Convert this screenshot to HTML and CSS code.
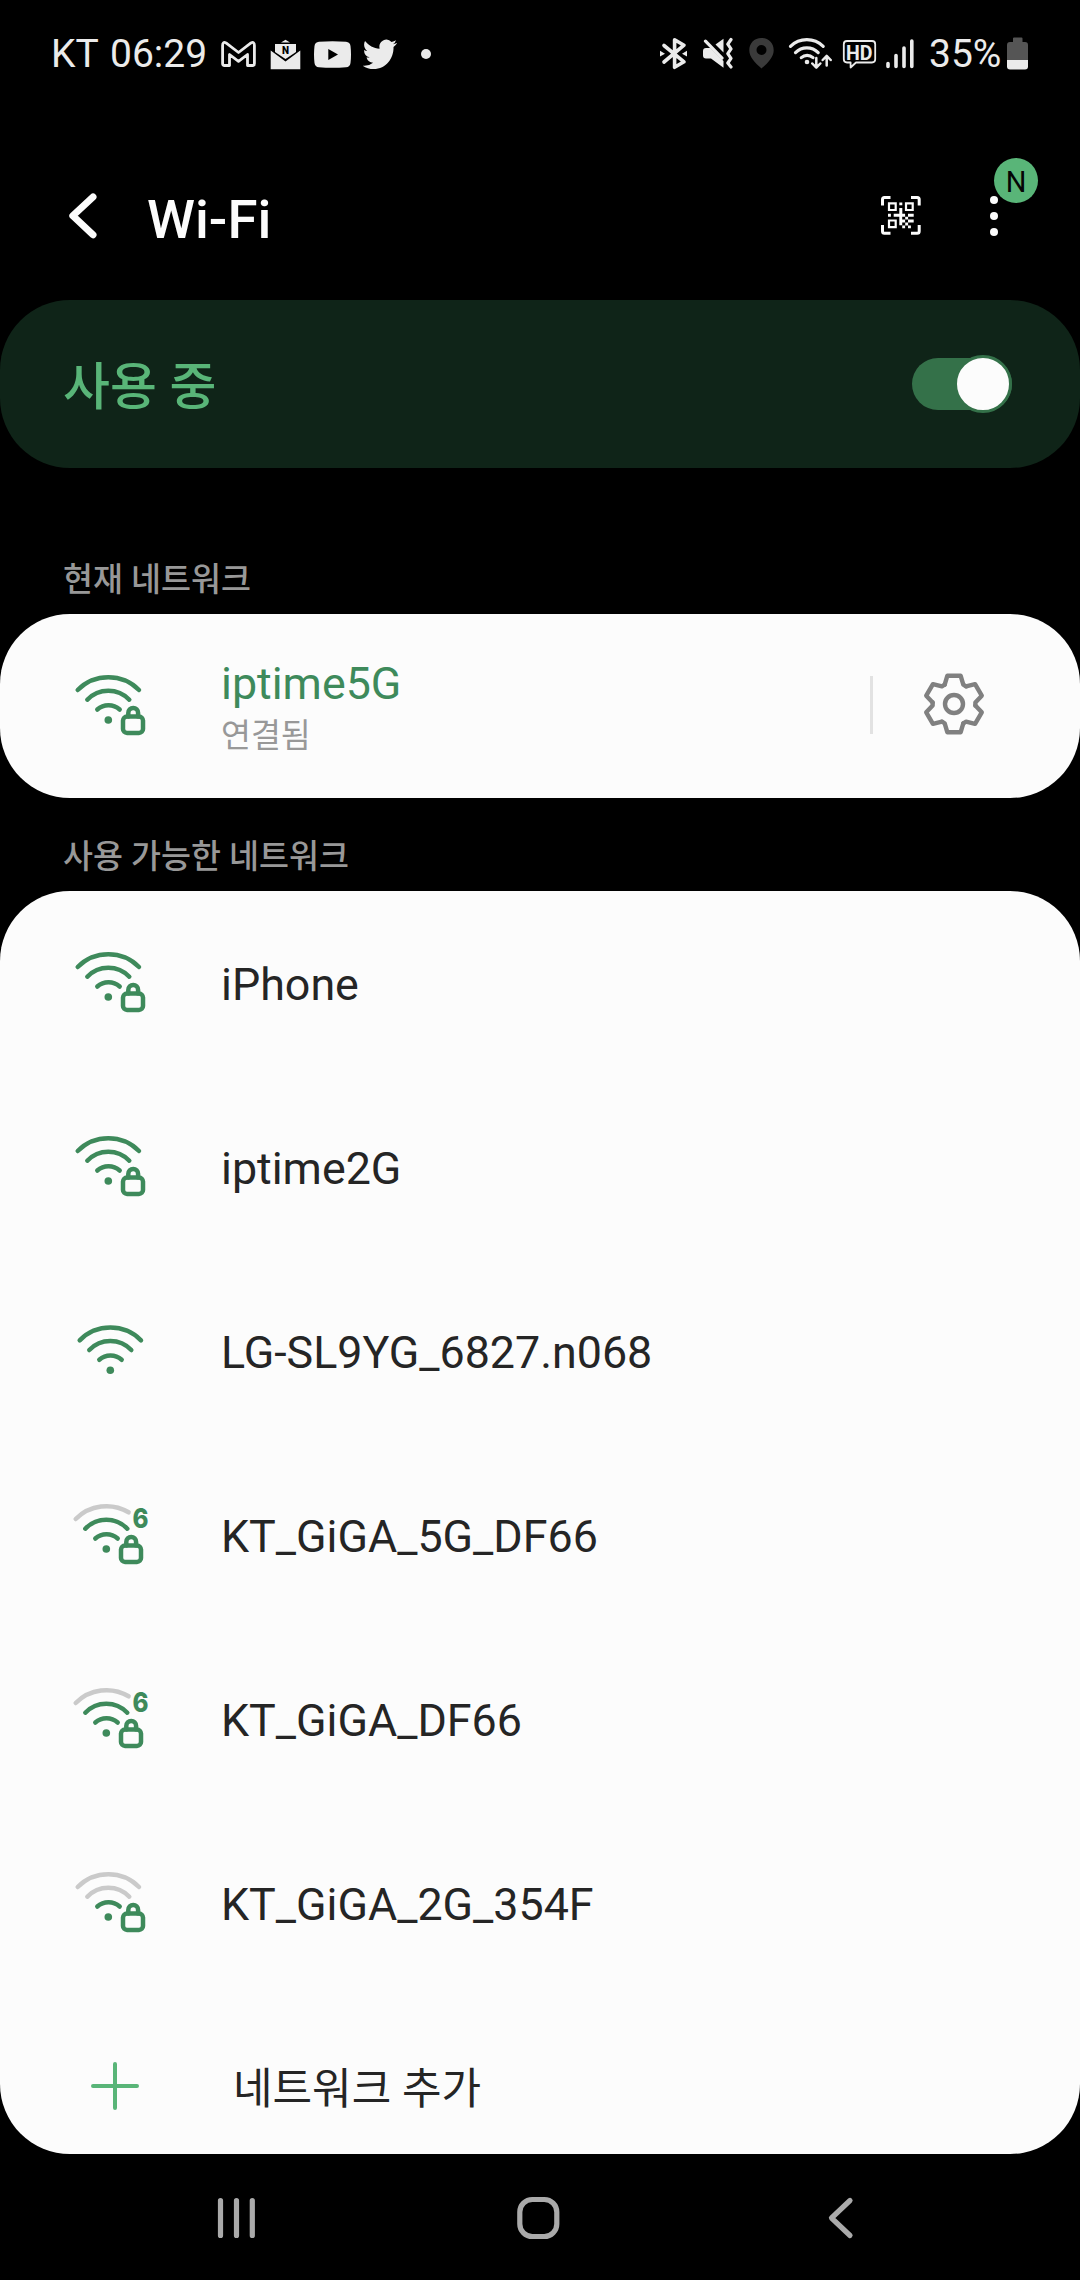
FILE: index.html
```html
<!DOCTYPE html>
<html lang="ko">
<head>
<meta charset="utf-8">
<title>Wi-Fi</title>
<link rel="stylesheet" href="styles.css">
</head>
<body>
<svg class="defs" width="0" height="0">
  <defs>
    <g id="lock">
      <rect x="51" y="45.600" width="20" height="16.300" rx="4"/>
      <path d="M56.300 45.500V41.900a4.900 4.900 0 0 1 9.800 0V45.500"/>
    </g>
    <path id="arc3" d="M5.700 19A43.300 43.300 0 0 1 67 19"/>
    <path id="arc3short" d="M5.700 19A43.300 43.300 0 0 1 58.600 12.300"/>
    <path id="arc2" d="M15.300 28.700A29 29 0 0 1 57.300 28.700"/>
    <path id="arc1" d="M25.300 38.500A17 17 0 0 1 47.700 38.500"/>
    <circle id="dot" cx="36.300" cy="49" r="3.800"/>
    <path id="tooth" d="M-9.300-19.300L-6.700-28.200H6.700L9.300-19.300L12.050-17.700"/>
  </defs>
</svg>

<header class="status">
  <span class="carrier">KT</span>
  <span class="clock">06:29</span>
  <svg class="st gmail" width="36" height="40" viewBox="220 34 36 40"><path class="line" d="M222.600 45.500q0-4.200 3.400-2.600L238.500 52.500 251 42.900q3.400-1.600 3.400 2.600V63.500q0 2-2 2H247.500V54.500L238.500 61.300 229.500 54.500V65.500H224.600q-2 0-2-2z"/></svg>
  <svg class="st mail" width="32" height="40" viewBox="270 34 32 40"><path d="M281 42.500L285.500 39.700 290 42.500zM275 44H296V52L285.500 59 275 52zM270.700 50.500L285.500 61.500 300.300 50.500V69.300H270.700z"/><text class="mail-n" x="285.500" y="54">N</text></svg>
  <svg class="st tube" width="38" height="40" viewBox="314 34 38 40"><path fill-rule="evenodd" d="M319 41.700q13.500-1 27 0 4 .3 4.500 4.300 1 8.500 0 17-.5 4-4.500 4.300-13.500 1-27 0-4-.3-4.500-4.300-1-8.500 0-17 .5-4 4.500-4.300zM328.300 49V60L338 54.500z"/></svg>
  <svg class="st bird" width="36" height="40" viewBox="362 34 36 40"><path transform="translate(362.700 36.200) scale(1.430 1.510)" d="M23.953 4.570a10 10 0 01-2.825.775 4.958 4.958 0 002.163-2.723c-.951.555-2.005.959-3.127 1.184a4.920 4.920 0 00-8.384 4.482C7.690 8.095 4.067 6.130 1.640 3.162a4.822 4.822 0 00-.666 2.475c0 1.710.870 3.213 2.188 4.096a4.904 4.904 0 01-2.228-.616v.06a4.923 4.923 0 003.946 4.827 4.996 4.996 0 01-2.212.085 4.936 4.936 0 004.604 3.417 9.867 9.867 0 01-6.102 2.105c-.39 0-.779-.023-1.170-.067a13.995 13.995 0 007.557 2.209c9.053 0 13.998-7.496 13.998-13.985 0-.21 0-.42-.015-.63A9.935 9.935 0 0024 4.590z"/></svg>
  <i class="more-dot"></i>
  <svg class="st bt" width="30" height="40" viewBox="659 34 30 40"><path class="thick" d="M664 45.500L684 61.800 674.600 67.300V39.700L684 45.200 664 62"/><path d="M660 50.800v5.800l5-2.900zM687 50.800v5.800l-5-2.900z"/></svg>
  <svg class="st mute" width="31" height="40" viewBox="702 34 31 40"><path d="M703 51q0-3 3-3H710.500L723.500 61V67.700L711 58.500H706q-3 0-3-3zM715.500 44.500L723.500 38.700V52.500z"/><path class="mid" d="M705.500 41.200L722 58M731 39.500L727.800 44.200 731 48.900 727.800 53.600 731 58.300 727.800 63 731 67"/></svg>
  <svg class="st pin" width="27" height="40" viewBox="748 34 27 40"><path fill-rule="evenodd" d="M761.500 38C754 38 749.300 43.500 749.300 50.300 749.300 57 755 63 761.500 68.500 768 63 773.700 57 773.700 50.300 773.700 43.500 769 38 761.500 38zM761.500 45a5 5 0 1 1 0 10 5 5 0 0 1 0-10z"/></svg>
  <svg class="st swifi" width="44" height="40" viewBox="788 34 44 40"><path class="mid" d="M790.500 46.300A23.400 23.400 0 0 1 823.200 46.300M795.500 52.600A16 16 0 0 1 818.200 52.600M801.300 57.600A9 9 0 0 1 813 57.600"/><circle cx="807" cy="62" r="2.300"/><path class="thin" d="M816.300 58V67.500M812.300 63.500L816.300 67.700 820.300 63.500M826.700 65.500V56M822.700 60L826.700 55.800 830.700 60"/></svg>
  <svg class="st hd" width="36" height="40" viewBox="842 34 36 40"><path class="hair" d="M847 41H872q3.200 0 3.200 3.200V59.300q0 3.200-3.200 3.200H856L850.600 67.500V62.500H847q-3.200 0-3.200-3.200V44.200q0-3.200 3.200-3.200z"/><text class="hd-t" x="846" y="59.500" textLength="26.500" lengthAdjust="spacingAndGlyphs">HD</text></svg>
  <svg class="st sig" width="30" height="40" viewBox="885 34 30 40"><path class="bars" d="M888 63.500V66.500M896 55.500V66.500M904 48V66.500M911.800 41V66.500"/></svg>
  <span class="percent">35%</span>
  <svg class="st bat" width="22" height="40" viewBox="1007 34 22 40"><path class="grey" d="M1013 42V38.500q0-1 1-1H1021.500q1 0 1 1V42H1025q3 0 3 3V60H1007V45q0-3 3-3z"/><path d="M1007 60H1028V66.500q0 3-3 3H1010q-3 0-3-3z"/></svg>
</header>

<nav class="appbar">
  <svg class="back" width="30" height="48" viewBox="68 192 30 48"><path d="M93 197L72.800 215.800 93 234.800"/></svg>
  <h1>Wi-Fi</h1>
  <svg class="qr" width="40" height="40" viewBox="881 196 40 40">
    <path class="frame" d="M882.500 205.500V199.500q0-2 2-2H890.500M911 197.500H917.200q2 0 2 2V205.500M919.200 225V231.200q0 2-2 2H911M890.500 233.200H884.500q-2 0-2-2V225"/>
    <path class="finder" d="M889 203.300h6.700v6.700h-6.700zM906 203.300h6.700v6.700h-6.700zM889 220.500h6.700v6.700h-6.700z"/>
    <path d="M899.300 202.400h3v2.900h-3zM899.300 208h3v6h-3zM888 213.800h2.900v2.900h-2.900zM893.700 213.800h11.400v2.900h-11.400zM908 213.800h5.700v2.900h-5.700zM899.300 216.700h2.900v8.500h-2.900zM905.200 216.700h2.900v2.900h-2.900zM902.200 219.600h2.900v2.900h-2.900zM908 219.600h5.700v2.900h-5.700zM905.200 222.500h2.900v2.900h-2.900zM902.200 225.400h2.900v2.900h-2.900zM908 225.400h2.900v2.900h-2.900z"/>
  </svg>
  <div class="menu">
    <i></i><i></i><i></i>
    <b class="badge">N</b>
  </div>
</nav>

<section class="master">
  <span>사용 중</span>
  <div class="switch"><i></i></div>
</section>

<h2 class="label first">현재 네트워크</h2>
<section class="card">
  <div class="row current">
    <svg class="wifi" width="80" height="70"><use href="#arc3"/><use href="#arc2"/><use href="#arc1"/><use class="fill" href="#dot"/><use href="#lock"/></svg>
    <div class="names"><span class="ssid">iptime5G</span><span class="state">연결됨</span></div>
    <i class="divider"></i>
    <svg class="gear" width="64" height="64" viewBox="-32 -32 64 64"><use href="#tooth"/><use href="#tooth" transform="rotate(60)"/><use href="#tooth" transform="rotate(120)"/><use href="#tooth" transform="rotate(180)"/><use href="#tooth" transform="rotate(240)"/><use href="#tooth" transform="rotate(300)"/><circle r="9"/></svg>
  </div>
</section>

<h2 class="label">사용 가능한 네트워크</h2>
<section class="card">
  <div class="row">
    <svg class="wifi" width="80" height="70"><use href="#arc3"/><use href="#arc2"/><use href="#arc1"/><use class="fill" href="#dot"/><use href="#lock"/></svg>
    <span class="ssid">iPhone</span>
  </div>
  <div class="row">
    <svg class="wifi" width="80" height="70"><use href="#arc3"/><use href="#arc2"/><use href="#arc1"/><use class="fill" href="#dot"/><use href="#lock"/></svg>
    <span class="ssid">iptime2G</span>
  </div>
  <div class="row">
    <svg class="wifi" width="80" height="70" viewBox="-2 -5.300 80 70"><use href="#arc3"/><use href="#arc2"/><use href="#arc1"/><use class="fill" href="#dot"/></svg>
    <span class="ssid">LG-SL9YG_6827.n068</span>
  </div>
  <div class="row">
    <svg class="wifi" width="80" height="70" viewBox="2 0 80 70"><use class="off" href="#arc3short"/><use href="#arc2"/><use href="#arc1"/><use class="fill" href="#dot"/><use href="#lock"/><text class="six" x="62.500" y="28" textLength="16" lengthAdjust="spacingAndGlyphs">6</text></svg>
    <span class="ssid">KT_GiGA_5G_DF66</span>
  </div>
  <div class="row">
    <svg class="wifi" width="80" height="70" viewBox="2 0 80 70"><use class="off" href="#arc3short"/><use href="#arc2"/><use href="#arc1"/><use class="fill" href="#dot"/><use href="#lock"/><text class="six" x="62.500" y="28" textLength="16" lengthAdjust="spacingAndGlyphs">6</text></svg>
    <span class="ssid">KT_GiGA_DF66</span>
  </div>
  <div class="row">
    <svg class="wifi" width="80" height="70"><use class="off" href="#arc3"/><use class="off" href="#arc2"/><use href="#arc1"/><use class="fill" href="#dot"/><use href="#lock"/></svg>
    <span class="ssid">KT_GiGA_2G_354F</span>
  </div>
  <div class="row add">
    <svg class="plus" width="50" height="50"><path d="M25 3V47M3 25H47"/></svg>
    <span>네트워크 추가</span>
  </div>
</section>

<footer class="keys">
  <svg width="40" height="44"><path d="M4.500 4.500V39.500M20.500 4.500V39.500M36.300 4.500V39.500"/></svg>
  <svg width="44" height="44"><rect x="3.800" y="3.500" width="37" height="37" rx="12.500"/></svg>
  <svg width="30" height="44"><path d="M24 4.500L5.500 22 24 39.500"/></svg>
</footer>
</body>
</html>
```
FILE: styles.css
```css
* { box-sizing: border-box; }
body {
  margin: 0;
  width: 1080px;
  height: 2280px;
  overflow: hidden;
  background: #000;
  color: #fcfcfc;
  font-family: Roboto, "Noto Sans CJK KR", sans-serif;
  display: flex;
  flex-direction: column;
}
svg { display: block; flex: none; }
.defs { height: 0; }

.status {
  height: 108px;
  flex: none;
  display: flex;
  align-items: center;
  padding-left: 51px;
  font-size: 39px;
  color: #ebebeb;
}
.carrier { width: 59px; }
.clock { width: 110px; }
.carrier, .clock, .percent { line-height: 46px; white-space: nowrap; }
.st { fill: #ebebeb; }
.st .line, .st .thick, .st .mid, .st .thin, .st .hair, .st .bars {
  fill: none;
  stroke: #ebebeb;
  stroke-linecap: round;
  stroke-linejoin: round;
}
.st .line { stroke-width: 2.800; }
.st .thick { stroke-width: 3.600; }
.st .mid { stroke-width: 3.200; }
.st .thin { stroke-width: 2.500; }
.st .hair { stroke-width: 1.800; }
.st .bars { stroke-width: 3.600; }
.mail { margin-left: 14px; }
.mail-n { font: 900 10px Roboto, sans-serif; text-anchor: middle; fill: #000; }
.tube { margin-left: 12px; }
.bird { margin-left: 10px; }
.more-dot { width: 10px; height: 10px; margin-left: 23px; border-radius: 50%; background: #ebebeb; }
.bt { margin-left: 228px; }
.mute { margin-left: 13px; }
.st.pin { margin-left: 15px; fill: #3a3a3a; }
.swifi { margin-left: 13px; }
.hd { margin-left: 10px; }
.hd-t { font: 700 20px Roboto, sans-serif; }
.sig { margin-left: 7px; }
.percent { margin-left: 14px; width: 78px; }
.bat .grey { fill: #555; }

.appbar {
  height: 192px;
  flex: none;
  display: flex;
  align-items: center;
  padding: 24px 0 0 68px;
}
.back path { fill: none; stroke: #fcfcfc; stroke-width: 7; stroke-linecap: round; stroke-linejoin: round; }
h1 { margin: 6px 0 0 49px; width: 734px; font-size: 54.500px; line-height: 64px; font-weight: 500; }
.qr { fill: #fcfcfc; }
.qr .frame { fill: none; stroke: #fcfcfc; stroke-width: 3; }
.qr .finder { fill: none; stroke: #fcfcfc; stroke-width: 2.200; }
.menu { position: relative; margin: 0 0 0 69px; width: 8px; display: flex; flex-direction: column; gap: 8.400px; }
.menu i { width: 8px; height: 8px; border-radius: 50%; background: #fcfcfc; }
.badge {
  position: absolute;
  left: 4px;
  top: -38px;
  width: 44px;
  height: 45px;
  border-radius: 50%;
  background: #59b578;
  color: #050505;
  font-size: 29px;
  font-weight: 400;
  line-height: 48px;
  text-align: center;
}

.master {
  height: 168px;
  flex: none;
  display: flex;
  align-items: center;
  justify-content: space-between;
  padding: 0 68px 0 63px;
  border-radius: 70px;
  background: #0f2418;
  color: #59b578;
  font-size: 51px;
  font-weight: 500;
}
.master span { padding-bottom: 2px; }
.switch { width: 100px; height: 52px; border-radius: 26px; background: #347149; display: flex; align-items: center; justify-content: flex-end; }
.switch i { flex: none; width: 58px; height: 58px; border-radius: 50%; background: #fcfcfc; border: 3px solid #347149; }

.label { margin: 0; height: 93px; flex: none; padding: 35px 0 0 63px; font-size: 32.600px; line-height: 48px; font-weight: 500; color: #989898; }
.label.first { height: 146px; padding-top: 88px; }

.card { flex: none; border-radius: 70px; background: #fcfcfc; color: #252525; }
.row { height: 184px; display: flex; align-items: center; padding-left: 72px; }
.wifi { margin: 0 69px 0 0; fill: none; stroke: #3e8a5b; stroke-width: 4.500; stroke-linecap: round; overflow: visible; }
.wifi .fill { fill: #3e8a5b; stroke: none; }
.wifi .off { stroke: #cacaca; }
.six { font: 800 27px Inter, sans-serif; fill: #3e8a5b; stroke: none; }
.ssid { font-size: 44.800px; line-height: 54px; padding-top: 3px; white-space: nowrap; }
.names { width: 649px; display: flex; flex-direction: column; padding-top: 6px; }
.current .ssid { color: #3e8a5b; }
.state { font-size: 32.500px; line-height: 50px; color: #989898; }
.names .ssid { padding-top: 0; }
.divider { width: 3px; height: 58px; margin-bottom: 2px; background: #e2e2e2; }
.gear { margin: 0 0 4px 49px; fill: none; stroke: #808080; stroke-width: 4.400; stroke-linecap: round; stroke-linejoin: round; }
.add { height: 159px; padding-left: 90px; padding-top: 22px; font-size: 43px; }
.add span { padding-bottom: 1px; }
.plus { margin-right: 93px; fill: none; stroke: #59b578; stroke-width: 4; stroke-linecap: round; }

.keys { height: 126px; flex: none; display: flex; align-items: center; padding: 2px 0 0 216px; fill: none; stroke: #aaa; stroke-width: 5.200; stroke-linecap: round; stroke-linejoin: round; }
.keys svg + svg { margin-left: 260px; }
.keys svg:last-child { margin-left: 266px; }
```
